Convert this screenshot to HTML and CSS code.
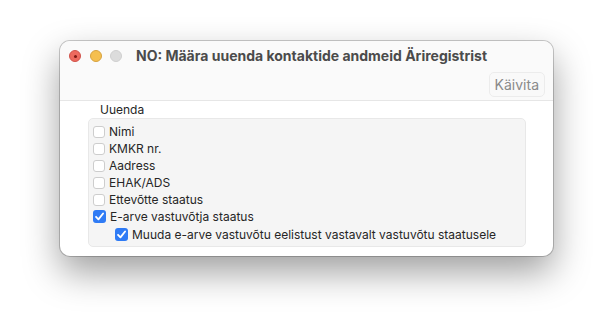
FILE: index.html
```
<!DOCTYPE html>
<html lang="et">
<head>
    <meta charset="UTF-8">
    <title>NO: Määra uuenda kontaktide andmeid Äriregistrist</title>
    <link rel="stylesheet" href="styles.css">
</head>
<body>
    <div class="window">
        <div class="titlebar">
            <div class="lights">
                <span class="light close"></span>
                <span class="light min"></span>
                <span class="light zoom"></span>
            </div>
            <h1>NO: Määra uuenda kontaktide andmeid Äriregistrist</h1>
        </div>
        <div class="toolbar">
            <button class="run" disabled>Käivita</button>
        </div>
        <div class="content">
            <div class="group-label">Uuenda</div>
            <div class="group">
                <label class="row"><span class="box"></span>Nimi</label>
                <label class="row"><span class="box"></span>KMKR nr.</label>
                <label class="row"><span class="box"></span>Aadress</label>
                <label class="row"><span class="box"></span>EHAK/ADS</label>
                <label class="row"><span class="box"></span>Ettevõtte staatus</label>
                <label class="row"><span class="box checked"><svg viewBox="0 0 12 12"><path d="M2.8 6.3 L5 8.6 L9.3 3.2"/></svg></span>E-arve vastuvõtja staatus</label>
                <label class="row sub"><span class="box checked"><svg viewBox="0 0 12 12"><path d="M2.8 6.3 L5 8.6 L9.3 3.2"/></svg></span>Muuda e-arve vastuvõtu eelistust vastavalt vastuvõtu staatusele</label>
            </div>
        </div>
    </div>
</body>
</html>
```

FILE: styles.css
```
body {
    margin: 0;
    padding: 0;
    height: 336px;
    background-color: #fff;
    font-family: Inter, "Liberation Sans", sans-serif;
    color: #262626;
}

.window {
    width: 493px;
    height: 215px;
    margin: 41px 0 0 60px;
    border-radius: 10px;
    background-color: #fff;
    box-shadow: 0 0 0 1px rgba(0, 0, 0, 0.2), 0 16px 36px rgba(0, 0, 0, 0.38);
    overflow: hidden;
}

.titlebar {
    display: flex;
    align-items: center;
    height: 29px;
    padding-left: 9px;
    background-color: #fafafa;
}

.lights {
    display: flex;
    gap: 8.5px;
    margin-right: 14px;
}

.light {
    width: 12px;
    height: 12px;
    border-radius: 50%;
    display: block;
    box-sizing: border-box;
}

.light.close {
    background-color: #ed6a5e;
    border: 0.5px solid #d0524a;
    position: relative;
}

.light.close::after {
    content: "";
    position: absolute;
    left: 4px;
    top: 4px;
    width: 3px;
    height: 3px;
    border-radius: 50%;
    background-color: #7d1a14;
}

.light.min {
    background-color: #f5bf4f;
    border: 0.5px solid #d6a240;
}

.light.zoom {
    background-color: #dcdcdc;
    border: 0.5px solid #cfcfcf;
}

h1 {
    margin: 0;
    font-size: 14px;
    font-weight: 700;
    color: #4b4b4b;
}

.toolbar {
    display: flex;
    justify-content: flex-end;
    height: 30px;
    padding-right: 8px;
    background-color: #fafafa;
    border-bottom: 1px solid #e6e6e6;
}

.run {
    height: 25px;
    margin-top: 2px;
    padding: 0 5px;
    font-family: inherit;
    font-size: 14px;
    color: #8a8a8a;
    background-color: #f9f9f9;
    border: 1px solid #ececec;
    border-radius: 5px;
}

.content {
    padding: 1px 27px 0 28px;
    font-size: 12px;
}

.group-label {
    padding-left: 12px;
    line-height: 16px;
}

.group {
    padding: 4px 4px 3px 4px;
    background-color: #f5f5f5;
    border: 1px solid #e8e8e8;
    border-radius: 5px;
}

.row {
    display: flex;
    align-items: center;
    height: 17px;
    gap: 4px;
}

.row.sub {
    padding-left: 22px;
    height: 18px;
}

.box {
    width: 12px;
    height: 12px;
    box-sizing: border-box;
    border: 1px solid #cdcdcd;
    border-radius: 3px;
    background-color: #fff;
    display: flex;
    flex-shrink: 0;
}

.box.checked {
    width: 13px;
    height: 13px;
    border: none;
    background-color: #2f7bf5;
}

.box svg {
    width: 13px;
    height: 13px;
    fill: none;
    stroke: #fff;
    stroke-width: 1.7;
    stroke-linecap: round;
    stroke-linejoin: round;
}
```
